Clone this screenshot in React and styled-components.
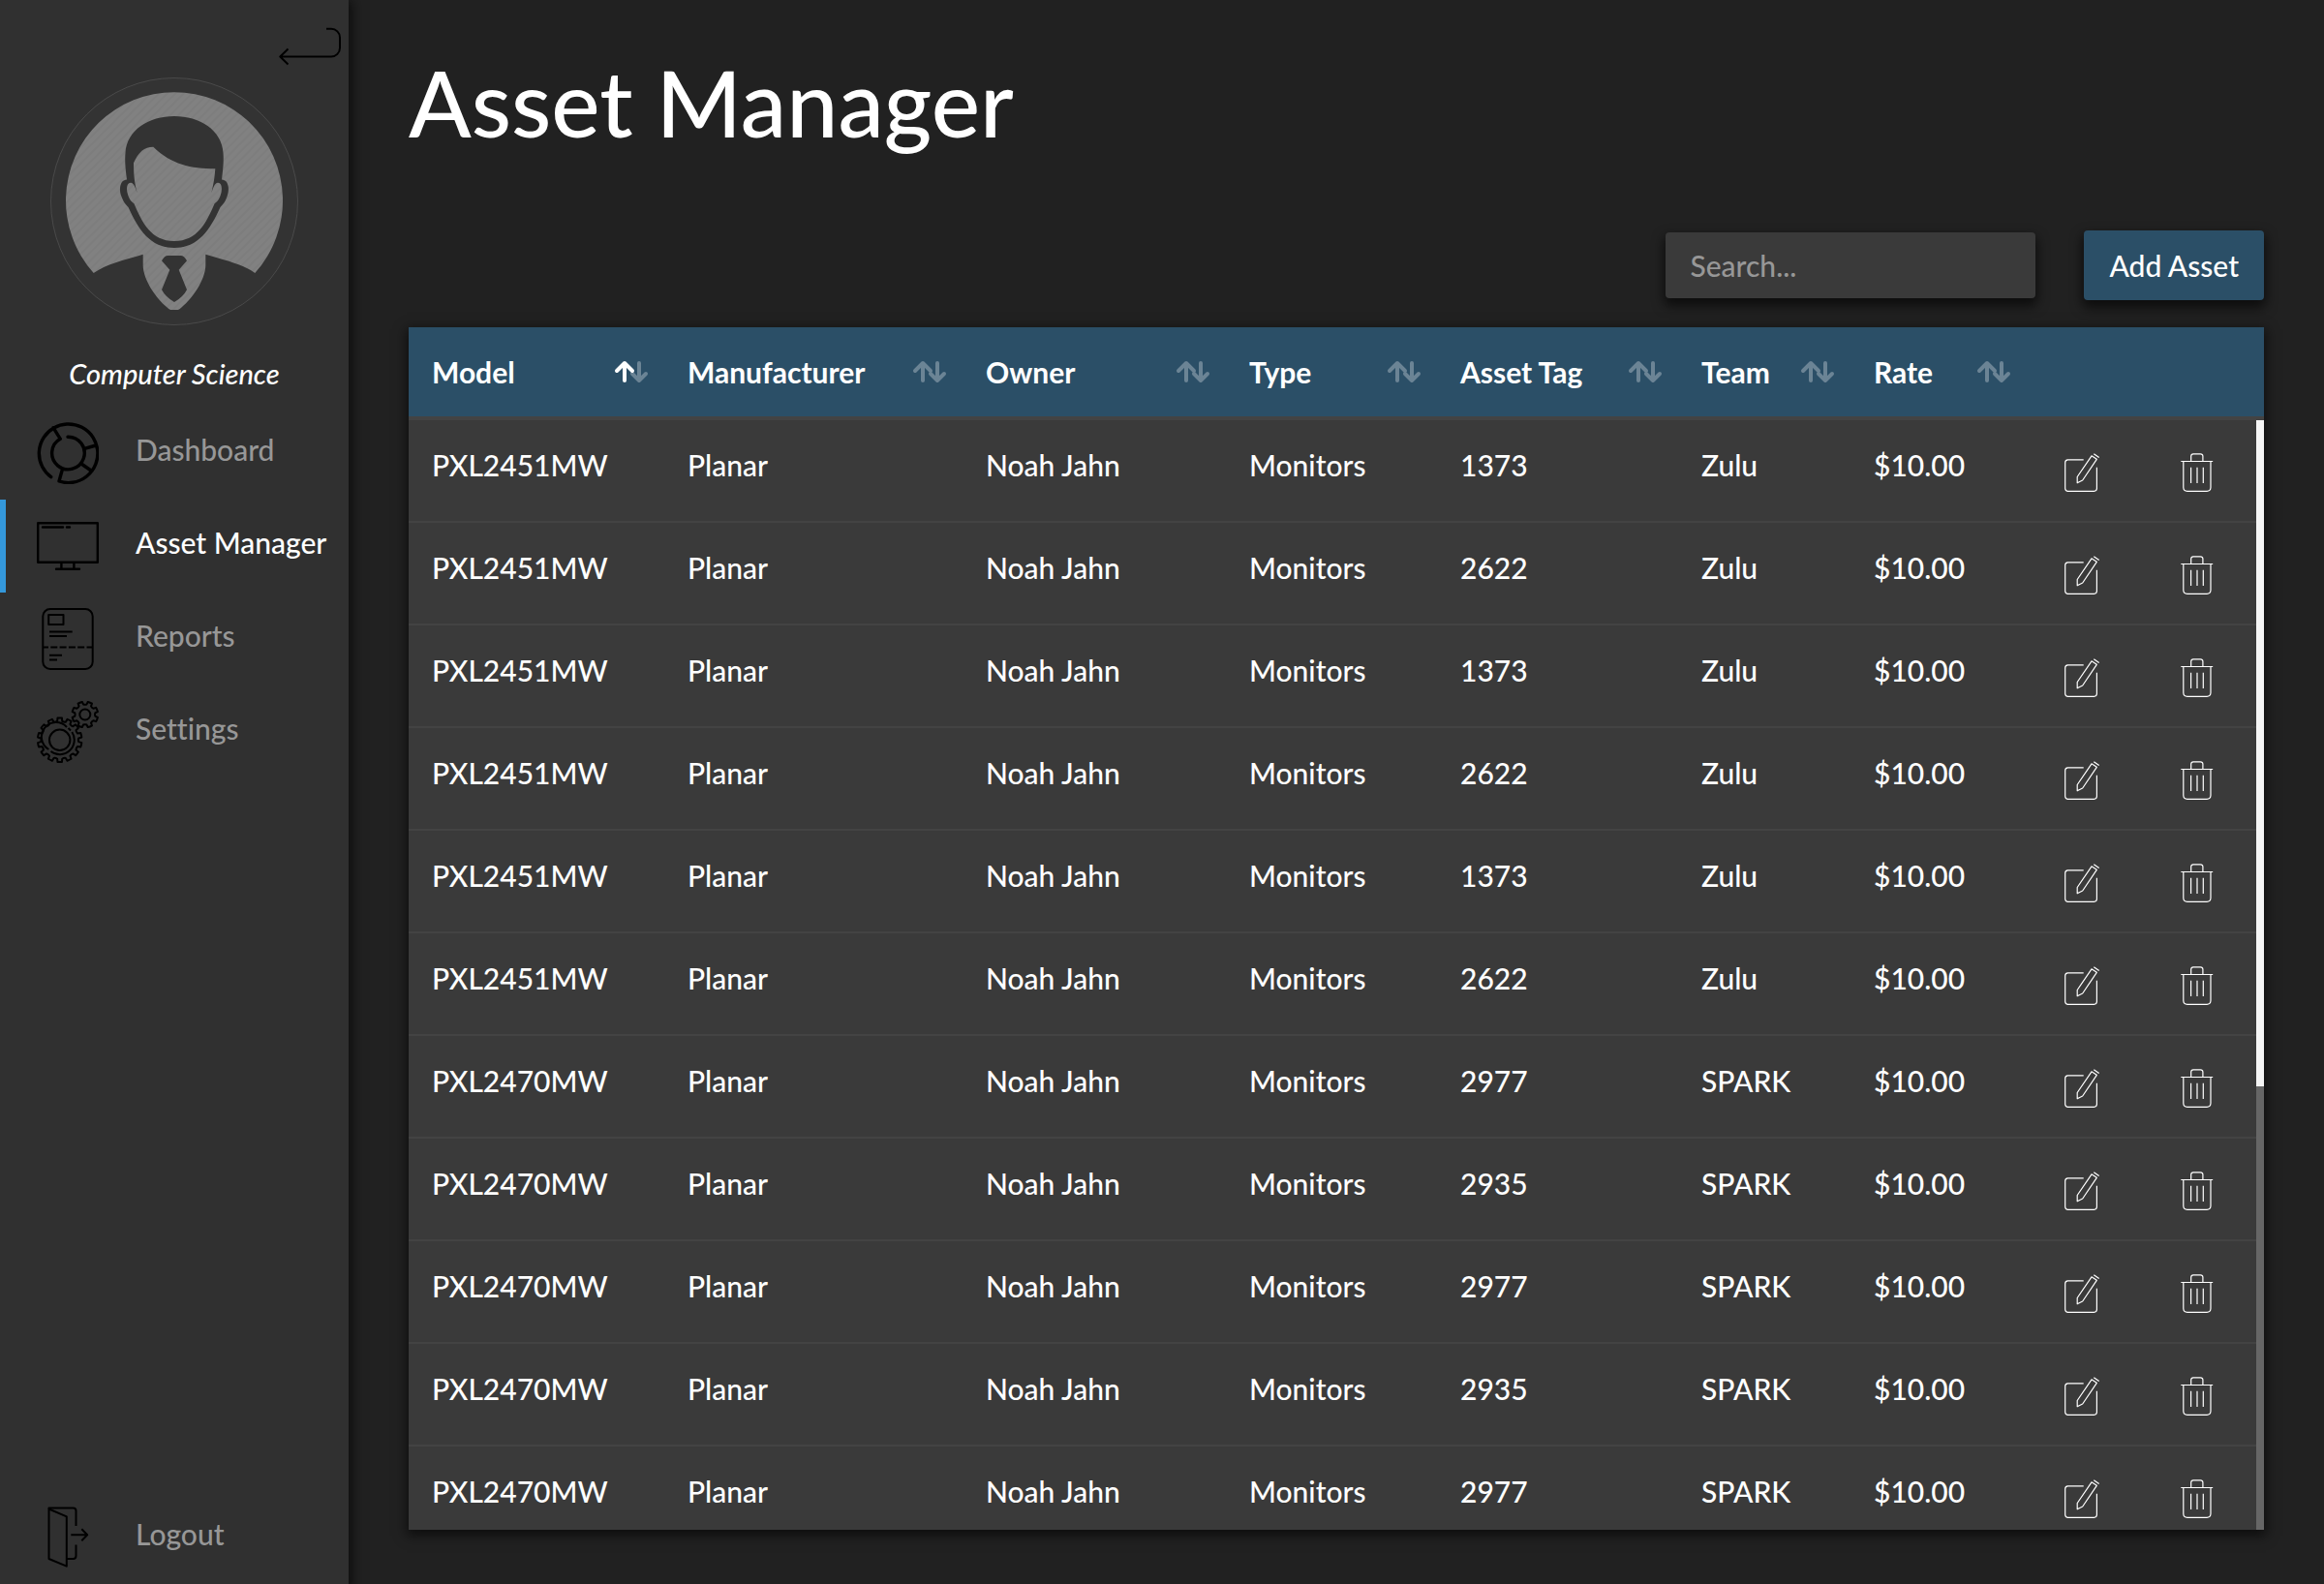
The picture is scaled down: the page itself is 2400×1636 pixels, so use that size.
import React, { useState } from 'react';
import styled, { createGlobalStyle } from 'styled-components';

const GlobalStyle = createGlobalStyle`
  *, *::before, *::after { box-sizing: border-box; }
  body {
    margin: 0;
    background: #212121;
    color: #fff;
    font-family: Lato, 'Liberation Sans', sans-serif;
    font-size: 30px;
    font-weight: 500;
    font-variant-ligatures: none;
    line-height: 40px;
  }
  button, input { font: inherit; color: inherit; border: 0; }
  button { cursor: pointer; background: none; padding: 0; }
`;

const Layout = styled.div`
  display: flex;
  height: 100vh;
`;

const Sidebar = styled.aside`
  display: flex;
  flex-direction: column;
  flex: 0 0 360px;
  background: #303030;
  box-shadow: 0 4px 12px 4px rgba(0, 0, 0, 0.6);
`;

const SidebarTop = styled.div`
  display: flex;
  justify-content: flex-end;
  padding: 16px 8px 0;
`;

const CollapseButton = styled.button`
  height: 64px;
`;

const Profile = styled.div`
  display: flex;
  flex-direction: column;
  align-items: center;
  gap: 30px;
  padding-bottom: 14px;
`;

const ProfileName = styled.div`
  font-size: 29px;
  font-style: italic;
`;

const Nav = styled.nav`
  display: flex;
  flex: 1;
  flex-direction: column;
`;

const NavItem = styled.a`
  display: flex;
  align-items: flex-start;
  gap: 38px;
  height: 96px;
  padding: 16px 0 0 ${(p) => (p.$active ? 32 : 38)}px;
  border-left: ${(p) => (p.$active ? '6px solid #3498db' : '0')};
  color: ${(p) => (p.$active ? '#fff' : '#979797')};
  text-decoration: none;
  margin-top: ${(p) => (p.$last ? 'auto' : 0)};
`;

const NavLabel = styled.span`
  padding-top: 8px;
  white-space: nowrap;
`;

const LineIcon = styled.svg`
  display: block;
  flex: none;
  width: ${(p) => p.$size}px;
  height: ${(p) => p.$size}px;
  fill: none;
  stroke: ${(p) => p.$color || '#000'};
  stroke-width: ${(p) => p.$stroke || 2};
  stroke-linecap: ${(p) => p.$cap || 'butt'};
  stroke-linejoin: round;
`;

const Main = styled.main`
  display: flex;
  flex: 1;
  flex-direction: column;
  min-width: 0;
  padding: 47px 62px 56px;
`;

const Title = styled.h1`
  margin: 0 0 75px;
  font-size: 95px;
  font-weight: 500;
  line-height: 116px;
`;

const Toolbar = styled.div`
  display: flex;
  align-items: center;
  justify-content: flex-end;
  gap: 50px;
  margin-bottom: 28px;
`;

const SearchInput = styled.input`
  width: 382px;
  height: 68px;
  padding: 0 25px;
  border-radius: 4px;
  background: #3a3a3a;
  box-shadow: 0 6px 12px 2px rgba(0, 0, 0, 0.6);
  &::placeholder { color: #979797; opacity: 1; }
`;

const AddButton = styled.button`
  height: 72px;
  padding: 0 26px;
  border-radius: 4px;
  background: #2b4f67;
  box-shadow: 0 6px 12px 2px rgba(0, 0, 0, 0.6);
`;

const Panel = styled.section`
  display: grid;
  flex: 1;
  grid-template-columns: minmax(0, 1fr) 8px;
  grid-template-rows: 96px minmax(0, 1fr);
  min-height: 0;
  overflow: hidden;
  background: #3a3a3a;
`;

const PanelShadow = styled.div`
  display: flex;
  flex: 1;
  min-height: 0;
  box-shadow: 0 4px 12px 2px rgba(0, 0, 0, 0.6);
`;

const TableArea = styled.div`
  grid-row: 1 / 3;
  overflow: hidden;
`;

const HeadCap = styled.div`
  background: #2b4f67;
  border-bottom: 4px solid #434343;
`;

const Rail = styled.div`
  background: #666;
`;

const Thumb = styled.div`
  height: 60%;
  background: #f5f5f5;
`;

const Table = styled.table`
  width: 100%;
  table-layout: fixed;
  border-collapse: separate;
  border-spacing: 0;
`;

const Th = styled.th`
  height: 96px;
  padding: 26px 16px 0 24px;
  border-bottom: 4px solid #434343;
  background: #2b4f67;
  text-align: left;
  vertical-align: top;
  font-weight: 700;
`;

const SortButton = styled.button`
  display: flex;
  align-items: center;
  justify-content: space-between;
  width: 100%;
`;

const Td = styled.td`
  height: 106px;
  padding: 26px 0 0 24px;
  border-bottom: 2px solid #434343;
  vertical-align: top;
  white-space: nowrap;
`;

const ActionTd = styled(Td)`
  padding: 34px 0 0;
`;

const ActionButton = styled.button`
  display: block;
  margin: 0 auto;
`;

const SortArrows = ({ dir }) => (
  <svg width="36" height="24" viewBox="0 0 36 24" fill="none" strokeWidth="4" strokeLinecap="round" strokeLinejoin="round" aria-hidden="true">
    <path d="M26 3V21M19 14L26 21L33 14" stroke={dir === 'desc' ? '#fff' : '#6b8495'} />
    <path d="M11 3V21M3 11L11 3L19 11" stroke={dir === 'asc' ? '#fff' : '#6b8495'} />
  </svg>
);

const gearPath = (cx, cy, outer, inner, teeth, turn = 0) => {
  const step = (Math.PI * 2) / teeth;
  const at = (r, a) => `${(cx + r * Math.cos(a)).toFixed(2)} ${(cy + r * Math.sin(a)).toFixed(2)}`;
  let d = '';
  for (let i = 0; i < teeth; i += 1) {
    const a = i * step + turn;
    d += `${i ? 'L' : 'M'}${at(inner, a - step * 0.29)}L${at(outer, a - step * 0.22)}`;
    d += `A${outer} ${outer} 0 0 1 ${at(outer, a + step * 0.22)}L${at(inner, a + step * 0.29)}`;
    d += `Q${at(inner - 0.8, a + step * 0.5)} ${at(inner, a + step * 0.71)}`;
  }
  return `${d}Z`;
};

const BackIcon = () => (
  <LineIcon $size={64} viewBox="0 0 64 64" aria-hidden="true">
    <path d="M49 13.7H54A9 9 0 0 1 63 22.7V33.5A9 9 0 0 1 54 42.5H1M9.5 34.5L1.3 42.5L9.5 50.5" />
  </LineIcon>
);

const DashboardIcon = () => (
  <LineIcon $size={64} $stroke={3.4} $cap="round" viewBox="0 0 64 64" aria-hidden="true">
    <path d="M14.7 56.7A30.3 30.3 0 1 1 23 61L26.5 48.5M32 15.2A16.8 16.8 0 1 1 24.3 17.3L17 5.7M49.3 27.4L61 24M46 43L56 50" />
  </LineIcon>
);

const MonitorIcon = () => (
  <LineIcon $size={64} $stroke={2.4} $cap="round" viewBox="0 0 64 64" aria-hidden="true">
    <path d="M1.2 8.2H62.8V48.8H1.2ZM6 12.5H27M31 12.5H34M25.4 49V55M38.4 49V55M20 55.7H44" />
  </LineIcon>
);

const ReportIcon = () => (
  <LineIcon $size={64} viewBox="0 0 64 64" aria-hidden="true">
    <rect x="6.3" y="1" width="51.4" height="62" rx="7.5" />
    <path d="M12.2 7H27.5V17H12.2ZM13 24.4H36.7M13 29H31M13 48.7H26M13 53.6H21" />
    <path d="M7 40.4H57" strokeDasharray="7 2.3" strokeDashoffset="2" />
  </LineIcon>
);

const SettingsIcon = () => (
  <LineIcon $size={64} viewBox="0 0 64 64" aria-hidden="true">
    <path d={gearPath(23.7, 40.3, 22.8, 19.6, 14, Math.PI / 14)} />
    <path d={gearPath(49.8, 14, 13.4, 10.7, 8, Math.PI / 8)} />
    <circle cx="49.8" cy="14" r="5.5" />
    <circle cx="23.7" cy="40.3" r="10.7" />
    <path d="M31 27A15 15 0 1 0 12.3 50M36.3 32A15 15 0 0 1 14.5 52M32.5 28L35 30.5" />
  </LineIcon>
);

const LogoutIcon = () => (
  <LineIcon $size={64} viewBox="0 0 64 64" aria-hidden="true">
    <path d="M12.5 2.5L30.8 10.3V61.7L12.5 54Z" />
    <path d="M12.5 2.5V1.5H37.5A3 3 0 0 1 40.5 4.5V20M40.5 39.5V51A3 3 0 0 1 37.5 54H31M35.3 29.3H52M46.3 23.3L52.2 29.3L46.3 35.3" />
  </LineIcon>
);

const EditIcon = () => (
  <LineIcon $size={40} $stroke={1.2} $color="#fff" viewBox="0 0 40 40" aria-hidden="true">
    <path d="M21.7 6.8H5.5A3 3 0 0 0 2.7 9.8V36.5A3 3 0 0 0 5.7 39.3H32.5A3 3 0 0 0 35.4 36.5V14.7" />
    <path d="M15.2 30.8V24.5L30 2.8L35.3 6.3L20.7 28ZM32.3 0.7L37.7 4.6" />
  </LineIcon>
);

const TrashIcon = () => (
  <LineIcon $size={40} $stroke={1.2} $color="#fff" viewBox="0 0 40 40" aria-hidden="true">
    <path d="M3.3 8.5H36.2M5.8 8.5V35.5A4 4 0 0 0 9.8 39.3H30A4 4 0 0 0 34 35.5V8.5M13.7 8.5V3A2.4 2.4 0 0 1 16 .8H23.5A2.4 2.4 0 0 1 25.9 3V8.5" />
    <path d="M13.6 14.7V31M20 14.7V31M26.3 14.7V31" />
  </LineIcon>
);

const Avatar = () => (
  <svg width="256" height="256" viewBox="0 0 256 256" role="img" aria-label="Profile">
    <defs>
      <pattern id="stripes" width="6" height="6" patternUnits="userSpaceOnUse" patternTransform="rotate(45)">
        <rect width="6" height="6" fill="#818181" />
        <rect width="2" height="6" fill="#7d7d7d" />
      </pattern>
    </defs>
    <circle cx="128" cy="128" r="127.5" fill="#333" stroke="#555" strokeWidth="0.7" />
    <path fill="url(#stripes)" d="M44.7 202A112 112 0 1 1 211.3 202C199 193 180 188.500 160.300 182.700V194C160.300 209 146 229 136 237Q133 240 131.500 240H124.500Q123 240 120 237C110 229 95.700 209 95.700 194V182.700C76 188.500 57 193 44.700 202Z" />
    <path fill="#333" d="M79 105.500C77 90 77 84 77.500 78C79 54 102 40 128 40S177 54 178.500 78C179 84 179 90 177 105.500C185 106 185 117 182.500 123C180 130 178 131 175.500 134C165 157 153 176 128 176S91 157 80.500 134C78 131 76 130 73.500 123C71 117 71 106 79 105.500Z" />
    <path fill="url(#stripes)" d="M106.300 71.700C97 71.700 91 77 86 88.300C86 101 87 110 89.700 119.300C88 114 86 108.500 83 108.700C79 109 78.500 114 79.500 119C81 125 83 128 86.300 130C95 150 104 169 128 169S161 150 169.700 130C173 128 175 125 176.500 119C177.500 114 177 109 173 108.700C170 108.500 168 114 166.300 119.300C168.500 110 169.500 105 170.300 94.300C145 94 125 90 106.300 71.700Z" />
    <path fill="#333" d="M121.300 184H134.700Q138 184 141 189.300L132.700 198.700L141 219.300Q137 227 128 232Q119 227 115 219.300L123.300 198.700L115 189.300Q118 184 121.300 184Z" />
  </svg>
);

const navItems = [
  { label: 'Dashboard', Icon: DashboardIcon },
  { label: 'Asset Manager', Icon: MonitorIcon, active: true },
  { label: 'Reports', Icon: ReportIcon },
  { label: 'Settings', Icon: SettingsIcon },
  { label: 'Logout', Icon: LogoutIcon, last: true },
];

const columns = [
  { key: 'model', label: 'Model', width: 264 },
  { key: 'manufacturer', label: 'Manufacturer', width: 308 },
  { key: 'owner', label: 'Owner', width: 272 },
  { key: 'type', label: 'Type', width: 218 },
  { key: 'tag', label: 'Asset Tag', width: 249 },
  { key: 'team', label: 'Team', width: 178 },
  { key: 'rate', label: 'Rate', width: 182 },
];

const asset = (model, tag, team) => ({
  model, manufacturer: 'Planar', owner: 'Noah Jahn', type: 'Monitors', tag, team, rate: '$10.00',
});

const assets = [
  ...['1373', '2622', '1373', '2622', '1373', '2622'].map((tag) => asset('PXL2451MW', tag, 'Zulu')),
  ...['2977', '2935', '2977', '2935', '2977'].map((tag) => asset('PXL2470MW', tag, 'SPARK')),
];

export default function App() {
  const [sort, setSort] = useState({ key: 'model', dir: 'asc' });
  const [query, setQuery] = useState('');

  const toggleSort = (key) =>
    setSort((s) => ({ key, dir: s.key === key && s.dir === 'asc' ? 'desc' : 'asc' }));

  const sign = sort.dir === 'asc' ? 1 : -1;
  const rows = assets
    .filter((a) => Object.values(a).join(' ').toLowerCase().includes(query.toLowerCase()))
    .sort((a, b) => sign * a[sort.key].localeCompare(b[sort.key]));

  return (
    <>
      <GlobalStyle />
      <Layout>
        <Sidebar>
          <SidebarTop>
            <CollapseButton type="button" aria-label="Collapse menu"><BackIcon /></CollapseButton>
          </SidebarTop>
          <Profile>
            <Avatar />
            <ProfileName>Computer Science</ProfileName>
          </Profile>
          <Nav>
            {navItems.map(({ label, Icon, active, last }) => (
              <NavItem key={label} href="#" $active={active} $last={last} aria-current={active ? 'page' : undefined}>
                <Icon />
                <NavLabel>{label}</NavLabel>
              </NavItem>
            ))}
          </Nav>
        </Sidebar>
        <Main>
          <Title>Asset Manager</Title>
          <Toolbar>
            <SearchInput
              type="text"
              aria-label="Search assets"
              placeholder="Search..."
              value={query}
              onChange={(e) => setQuery(e.target.value)}
            />
            <AddButton type="button">Add Asset</AddButton>
          </Toolbar>
          <PanelShadow>
            <Panel>
              <TableArea>
                <Table>
                  <colgroup>
                    {columns.map((c) => <col key={c.key} width={c.width} />)}
                    <col width={114} />
                    <col width={123} />
                  </colgroup>
                  <thead>
                    <tr>
                      {columns.map((c) => (
                        <Th key={c.key} scope="col">
                          <SortButton type="button" onClick={() => toggleSort(c.key)}>
                            {c.label}
                            <SortArrows dir={sort.key === c.key ? sort.dir : null} />
                          </SortButton>
                        </Th>
                      ))}
                      <Th scope="col" aria-label="Edit" />
                      <Th scope="col" aria-label="Delete" />
                    </tr>
                  </thead>
                  <tbody>
                    {rows.map((row, i) => (
                      <tr key={i}>
                        {columns.map((c) => <Td key={c.key}>{row[c.key]}</Td>)}
                        <ActionTd>
                          <ActionButton type="button" aria-label="Edit asset"><EditIcon /></ActionButton>
                        </ActionTd>
                        <ActionTd>
                          <ActionButton type="button" aria-label="Delete asset"><TrashIcon /></ActionButton>
                        </ActionTd>
                      </tr>
                    ))}
                  </tbody>
                </Table>
              </TableArea>
              <HeadCap />
              <Rail><Thumb /></Rail>
            </Panel>
          </PanelShadow>
        </Main>
      </Layout>
    </>
  );
}
